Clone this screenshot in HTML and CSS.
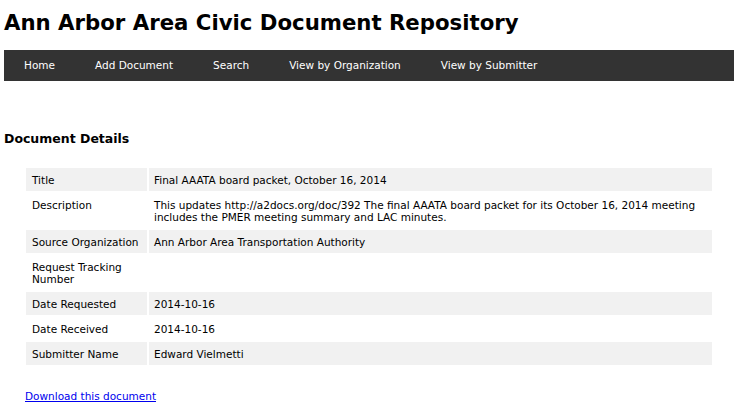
FILE: index.html
```html
<!DOCTYPE html>
<html>
<head>
<meta charset="utf-8">
<title>Document Details</title>
<link rel="stylesheet" href="styles.css">
</head>
<body>
<header class="site-header">
  <h1 class="site-title">Ann Arbor Area Civic Document Repository</h1>
  <nav class="main-nav">
    <a href="#">Home</a>
    <a href="#">Add Document</a>
    <a href="#">Search</a>
    <a href="#">View by Organization</a>
    <a href="#">View by Submitter</a>
  </nav>
</header>
<main class="content">
  <h2 class="section-title">Document Details</h2>
  <table class="details">
    <tr><th>Title</th><td>Final AAATA board packet, October 16, 2014</td></tr>
    <tr><th>Description</th><td>This updates http://a2docs.org/doc/392 The final AAATA board packet for its October 16, 2014 meeting includes the PMER meeting summary and LAC minutes.</td></tr>
    <tr><th>Source Organization</th><td>Ann Arbor Area Transportation Authority</td></tr>
    <tr><th>Request Tracking Number</th><td></td></tr>
    <tr><th>Date Requested</th><td>2014-10-16</td></tr>
    <tr><th>Date Received</th><td>2014-10-16</td></tr>
    <tr><th>Submitter Name</th><td>Edward Vielmetti</td></tr>
  </table>
  <p class="download"><a href="#">Download this document</a></p>
</main>
</body>
</html>
```
FILE: styles.css
```css
html, body {
  margin: 0;
  padding: 0;
  background: #fff;
}
body {
  padding: 0 5px 0 4px;
  font-family: "DejaVu Sans", sans-serif;
  font-size: 10.5px;
  color: #000;
}
.site-title {
  margin: 0;
  padding-top: 10px;
  font-size: 21.25px;
  font-weight: bold;
  line-height: 25px;
}
.main-nav {
  margin-top: 15px;
  background: #333333;
  height: 31px;
  display: flex;
  align-items: center;
}
.main-nav a {
  color: #fff;
  text-decoration: none;
  padding: 0 20px 1px 20px;
  font-size: 10.5px;
}
.section-title {
  margin: 50px 0 0 0;
  font-size: 12.5px;
  font-weight: bold;
  line-height: 16px;
}
.details {
  margin: 19px 0 0 20px;
  width: 690px;
  border-spacing: 2px;
  font-size: 10.5px;
}
.details th {
  width: 109px;
  text-align: left;
  font-weight: normal;
  vertical-align: top;
  padding: 5.5px 6px 5.5px 6px;
  line-height: 12px;
}
.details td {
  vertical-align: top;
  padding: 5.5px 5px 5.5px 5px;
  line-height: 12px;
}
.details tr:nth-child(odd) th,
.details tr:nth-child(odd) td {
  background: #f1f1f1;
}
.download {
  margin: 23px 0 0 21px;
}
.download a {
  color: #0000ee;
}
```
